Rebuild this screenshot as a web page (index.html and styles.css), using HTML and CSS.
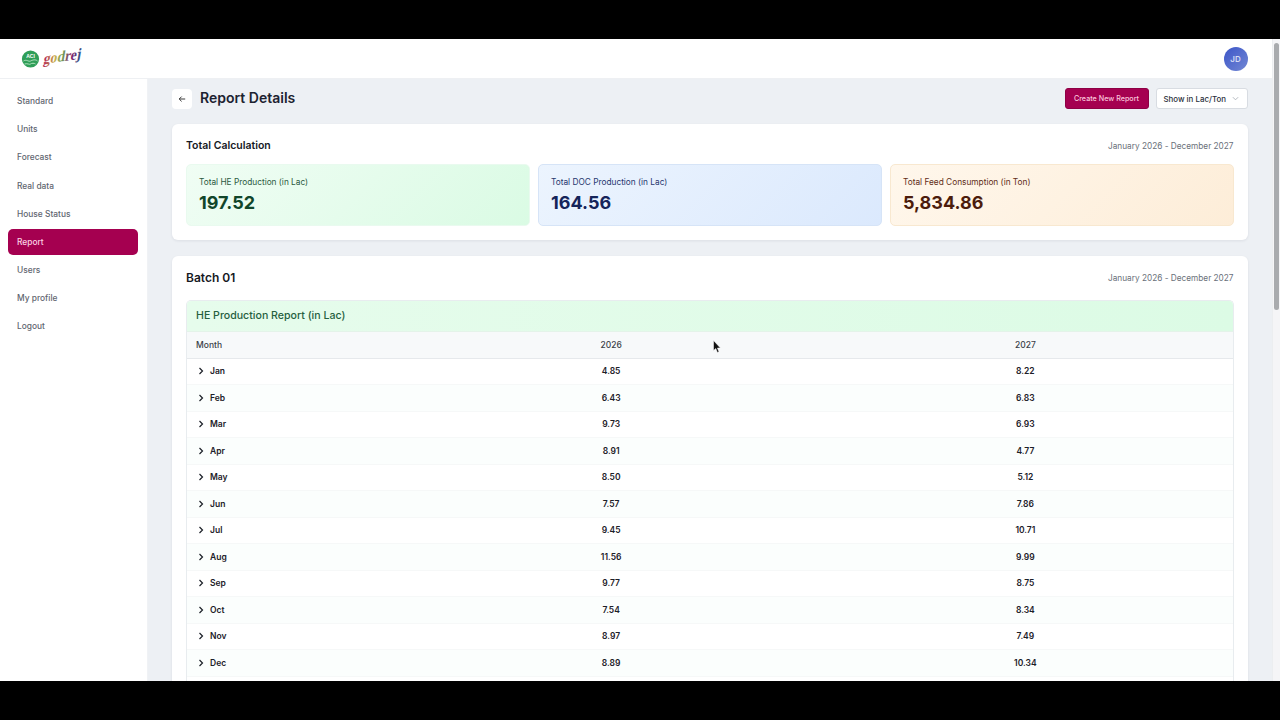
FILE: index.html
```html
<!DOCTYPE html>
<html lang="en">
<head>
<meta charset="utf-8">
<title>Report Details</title>
<link rel="stylesheet" href="styles.css">
</head>
<body>
<div class="bar"></div>
<div class="screen">
  <div class="app">
    <header class="topbar">
      <div class="logo">
        <svg class="logo-svg" width="66" height="22" viewBox="0 0 66 22">
          <defs>
            <linearGradient id="gd" x1="0" x2="1" y1="0" y2="0">
              <stop offset="0" stop-color="#b0205a"/>
              <stop offset=".3" stop-color="#c9b04a"/>
              <stop offset=".5" stop-color="#6f9c5a"/>
              <stop offset=".72" stop-color="#8a1f6a"/>
              <stop offset="1" stop-color="#2a5a8a"/>
            </linearGradient>
          </defs>
          <circle cx="9.5" cy="11" r="8.6" fill="#2f9e58"/>
          <path d="M2.5 13c3-2 5 1 7 0s5-2 7 0M3.5 16c3-1 5 1 6 0s4-1 5 0" fill="none" stroke="#bfe8c8" stroke-width=".9"/>
          <text x="9.5" y="10" class="logo-aci" text-anchor="middle">ACI</text>
          <text x="0" y="0" class="logo-god" transform="translate(22 16) rotate(-8) skewX(-18)" textLength="38" lengthAdjust="spacingAndGlyphs">godrej</text>
        </svg>
      </div>
      <div class="avatar">JD</div>
    </header>
    <div class="body">
      <nav class="side">
        <a class="nav">Standard</a>
        <a class="nav">Units</a>
        <a class="nav">Forecast</a>
        <a class="nav">Real data</a>
        <a class="nav">House Status</a>
        <a class="nav active">Report</a>
        <a class="nav">Users</a>
        <a class="nav">My profile</a>
        <a class="nav">Logout</a>
      </nav>
      <main class="main">
        <div class="pagehead">
          <div class="back">
            <svg width="8" height="8" viewBox="0 0 10 10"><path d="M9 5H1.5M4.5 2 1.5 5l3 3" fill="none" stroke="#333" stroke-width="1.2"/></svg>
          </div>
          <h1 class="title">Report Details</h1>
          <button class="create">Create New Report</button>
          <div class="select"><span>Show in Lac/Ton</span>
            <svg width="7" height="5" viewBox="0 0 8 5"><path d="M1 1l3 3 3-3" fill="none" stroke="#aab0b8" stroke-width="1"/></svg>
          </div>
        </div>

        <section class="card summary">
          <div class="cardhead">
            <h2 class="h-small">Total Calculation</h2>
            <span class="range">January 2026 - December 2027</span>
          </div>
          <div class="stats">
            <div class="stat green"><div class="stat-label">Total HE Production (in Lac)</div><div class="stat-val">197.52</div></div>
            <div class="stat blue"><div class="stat-label">Total DOC Production (in Lac)</div><div class="stat-val">164.56</div></div>
            <div class="stat orange"><div class="stat-label">Total Feed Consumption (in Ton)</div><div class="stat-val">5,834.86</div></div>
          </div>
        </section>

        <section class="card batch">
          <div class="cardhead batchhead">
            <h2 class="h-big">Batch 01</h2>
            <span class="range">January 2026 - December 2027</span>
          </div>
          <div class="table">
            <div class="tabletitle">HE Production Report (in Lac)</div>
            <div class="row thead"><div class="c-month">Month</div><div class="c-num">2026</div><div class="c-num">2027</div></div>
            <div class="row"><div class="c-month"><svg class="chev" viewBox="0 0 6 8"><path d="M1.5 1l3 3-3 3"/></svg>Jan</div><div class="c-num">4.85</div><div class="c-num">8.22</div></div>
            <div class="row"><div class="c-month"><svg class="chev" viewBox="0 0 6 8"><path d="M1.5 1l3 3-3 3"/></svg>Feb</div><div class="c-num">6.43</div><div class="c-num">6.83</div></div>
            <div class="row"><div class="c-month"><svg class="chev" viewBox="0 0 6 8"><path d="M1.5 1l3 3-3 3"/></svg>Mar</div><div class="c-num">9.73</div><div class="c-num">6.93</div></div>
            <div class="row"><div class="c-month"><svg class="chev" viewBox="0 0 6 8"><path d="M1.5 1l3 3-3 3"/></svg>Apr</div><div class="c-num">8.91</div><div class="c-num">4.77</div></div>
            <div class="row"><div class="c-month"><svg class="chev" viewBox="0 0 6 8"><path d="M1.5 1l3 3-3 3"/></svg>May</div><div class="c-num">8.50</div><div class="c-num">5.12</div></div>
            <div class="row"><div class="c-month"><svg class="chev" viewBox="0 0 6 8"><path d="M1.5 1l3 3-3 3"/></svg>Jun</div><div class="c-num">7.57</div><div class="c-num">7.86</div></div>
            <div class="row"><div class="c-month"><svg class="chev" viewBox="0 0 6 8"><path d="M1.5 1l3 3-3 3"/></svg>Jul</div><div class="c-num">9.45</div><div class="c-num">10.71</div></div>
            <div class="row"><div class="c-month"><svg class="chev" viewBox="0 0 6 8"><path d="M1.5 1l3 3-3 3"/></svg>Aug</div><div class="c-num">11.56</div><div class="c-num">9.99</div></div>
            <div class="row"><div class="c-month"><svg class="chev" viewBox="0 0 6 8"><path d="M1.5 1l3 3-3 3"/></svg>Sep</div><div class="c-num">9.77</div><div class="c-num">8.75</div></div>
            <div class="row"><div class="c-month"><svg class="chev" viewBox="0 0 6 8"><path d="M1.5 1l3 3-3 3"/></svg>Oct</div><div class="c-num">7.54</div><div class="c-num">8.34</div></div>
            <div class="row"><div class="c-month"><svg class="chev" viewBox="0 0 6 8"><path d="M1.5 1l3 3-3 3"/></svg>Nov</div><div class="c-num">8.97</div><div class="c-num">7.49</div></div>
            <div class="row"><div class="c-month"><svg class="chev" viewBox="0 0 6 8"><path d="M1.5 1l3 3-3 3"/></svg>Dec</div><div class="c-num">8.89</div><div class="c-num">10.34</div></div>
            <div class="row tail"></div>
          </div>
        </section>
      </main>
    </div>
  </div>
  <div class="scrollbar"><div class="thumb"></div></div>
  <svg class="cursor" width="8" height="13" viewBox="0 0 8 13"><path d="M.5.5v10l2.3-2 1.6 4 1.6-.7-1.6-3.8h3z" fill="#111" stroke="#fff" stroke-width=".5"/></svg>
</div>
<div class="bar"></div>
</body>
</html>
```
FILE: styles.css
```css
* { box-sizing: border-box; }
html, body { margin: 0; height: 720px; overflow: hidden; background: #000; }
body { display: flex; flex-direction: column; font-family: Inter, "Liberation Sans", sans-serif; color: #1c2230; }
.bar { height: 39px; flex: none; background: #000; }
.screen { position: relative; height: 642px; flex: none; display: flex; overflow: hidden; background: #fff; }
.app { flex: 1; min-width: 0; display: flex; flex-direction: column; }

.topbar { height: 39.5px; flex: none; display: flex; align-items: center; justify-content: space-between; padding: 1.5px 24.5px 0 21px; background: #fff; border-bottom: 1px solid #eef0f3; }
.logo { display: flex; }
.logo-svg { overflow: visible; }
.logo-aci { font: 700 5px "Liberation Sans", sans-serif; fill: #fff; }
.logo-god { font: 700 15px "Liberation Serif", serif; fill: url(#gd); }
.avatar { width: 24px; height: 24px; border-radius: 50%; background: linear-gradient(135deg, #3b55c8, #7388d4); color: #d5dcf5; font-size: 8px; font-weight: 600; display: flex; align-items: center; justify-content: center; }

.body { flex: 1; min-height: 0; display: flex; }
.side { width: 148px; flex: none; background: #fff; padding: 9.6px 9px 0 8px; display: flex; flex-direction: column; gap: 2.15px; border-right: 1px solid #f0f2f5; }
.nav { height: 26px; padding-left: 9px; display: flex; align-items: center; font-size: 8.4px; font-weight: 500; color: #5f6670; border-radius: 5px; }
.nav.active { background: #a50050; color: #fbd3e4; }

.main { flex: 1; min-width: 0; background: #edf0f4; padding: 9.5px 24.5px 0 24px; overflow: hidden; }
.pagehead { display: flex; align-items: center; height: 21px; margin-bottom: 15px; }
.back { width: 20px; height: 20px; border-radius: 4px; background: #fff; display: flex; align-items: center; justify-content: center; margin-right: 8px; }
.title { margin: -2px 0 0; flex: 1; font-size: 14px; font-weight: 600; color: #1c2230; }
.create { height: 21px; width: 84px; padding: 0; border: 1px solid #8e0045; border-radius: 3px; background: #a50050; color: #fbc6dc; font: 500 7.2px Inter, sans-serif; margin-right: 7px; }
.select { width: 92px; height: 21px; border: 1px solid #d8dce2; border-radius: 3px; background: #fff; font-size: 7.9px; font-weight: 500; color: #2a303b; display: flex; align-items: center; justify-content: space-between; padding: 0 8px 0 7px; white-space: nowrap; }

.card { background: #fff; border-radius: 6px; box-shadow: 0 1px 3px rgba(20, 30, 50, .08); padding: 0 14px; }
.summary { height: 116px; margin-bottom: 16px; }
.batch { padding-bottom: 20px; }
.cardhead { display: flex; align-items: center; justify-content: space-between; height: 40px; padding-top: 3px; }
.batchhead { height: 44px; padding-top: 0; }
.h-small { margin: 0; font-size: 10.5px; font-weight: 600; color: #16191f; }
.h-big { margin: -1px 0 0; font-size: 12px; font-weight: 600; color: #16191f; }
.range { font-size: 8.25px; color: #6a707a; }

.stats { display: grid; grid-template-columns: repeat(3, 1fr); gap: 8.5px; }
.stat { height: 62px; border-radius: 5px; padding: 11.5px 12px 0; border: 1px solid transparent; }
.stat-label { font-size: 8.3px; font-weight: 400; line-height: 11px; }
.stat-val { font-size: 18px; font-weight: 700; line-height: 24px; margin-top: 3px; }
.green { background: linear-gradient(135deg, #f0fdf4, #dafbe4); border-color: #e9faef; color: #11462a; }
.green .stat-label { color: #2b5a41; }
.blue { background: linear-gradient(135deg, #ecf4fe, #dbe9fd); border-color: #d6e4f7; color: #15245a; }
.blue .stat-label { color: #26376e; }
.orange { background: linear-gradient(135deg, #fff7ec, #fdedd8); border-color: #f8e8d0; color: #4c1c0c; }
.orange .stat-label { color: #5f2d17; }

.table { border: 1px solid #e8ecef; border-bottom: 0; border-radius: 5px 5px 0 0; overflow: hidden; }
.tabletitle { height: 31px; padding: 0 0 2px 9px; display: flex; align-items: center; background: linear-gradient(90deg, #e6fcec, #dcfbe5); color: #26603f; font-size: 10.6px; font-weight: 500; border-bottom: 1px solid #e4f3e9; }
.row { height: 26.5px; display: grid; grid-template-columns: 217px 1fr 1fr; align-items: center; font-size: 8.5px; font-weight: 600; color: #1c2028; background: #fff; border-bottom: 1px solid #f6f8f8; }
.row:nth-child(even) { background: #fbfefd; }
.row.thead { background: #f7f9fa; color: #3a3f48; font-weight: 500; border-bottom: 1px solid #e6e9ec; }
.tail { border-bottom: 0; }
.c-month { display: flex; align-items: center; padding-left: 9px; }
.c-num { text-align: center; }
.chev { width: 6px; height: 8px; margin: 0 6px 0 2px; fill: none; stroke: #1c2028; stroke-width: 1.2; }

.scrollbar { width: 8px; flex: none; background: #f5f5f7; border-left: 1px solid #eceef0; padding: 4px 1px 0; }
.thumb { width: 5px; height: 267px; background: #a9abae; border-radius: 3px; }
.cursor { position: absolute; left: 713px; top: 301px; }
```
